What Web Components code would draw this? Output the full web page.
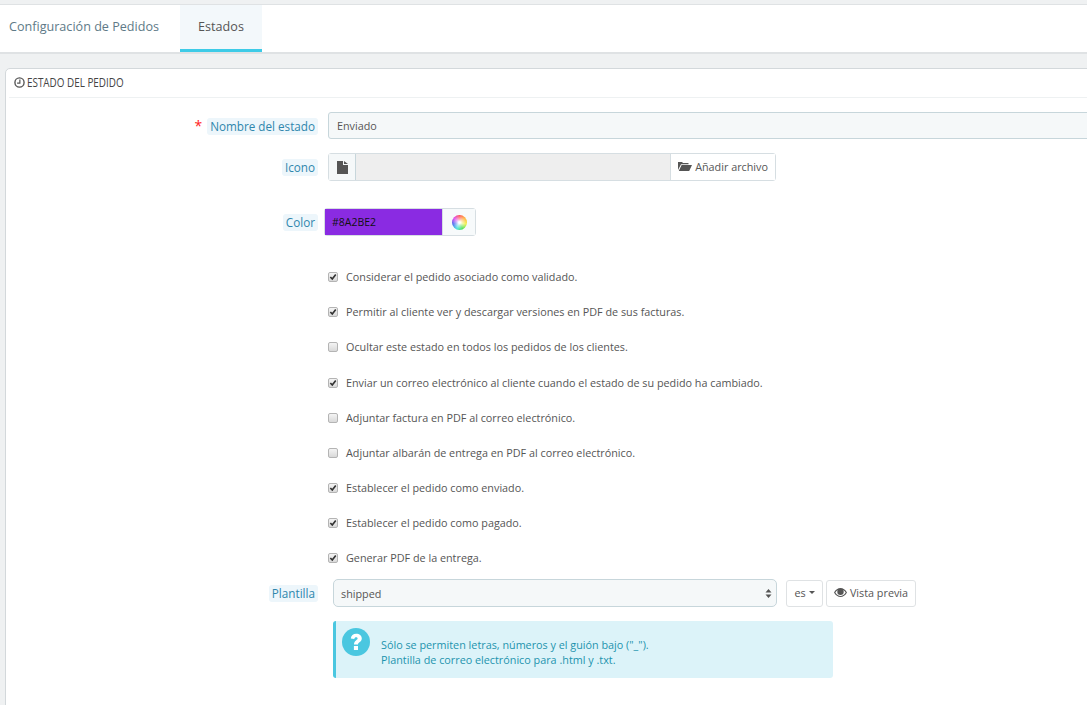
<!DOCTYPE html>
<html lang="es">
<head>
<meta charset="utf-8">
<title>Estados</title>
<style>
  html, body { margin: 0; height: 100%; overflow: hidden; background: #fff; }
  body { font-family: "Open Sans", "Liberation Sans", sans-serif; font-size: 10.8px; color: #555; }
</style>
</head>
<body>
<order-state-page></order-state-page>

<script>
const ICONS = {
  clock: '<svg width="11" height="11" viewBox="0 0 12 12"><circle cx="6" cy="6" r="5" fill="none" stroke="currentColor" stroke-width="1.5"/><path d="M6.400 2.800v3.800H3.400" fill="none" stroke="currentColor" stroke-width="1.300"/></svg>',
  file: '<svg width="11" height="13" viewBox="0 0 11 13"><path d="M0 0h6v4h5v9H0zM7 0l4 3H7z" fill="currentColor"/></svg>',
  folder: '<svg width="14" height="10" viewBox="0 0 14 10"><path d="M0 9V1h4l1 1h5.500v1.300H3L0 9zM3.600 4H14l-2.800 6H.8z" fill="currentColor"/></svg>',
  eye: '<svg width="13" height="9" viewBox="0 0 13 9"><path fill-rule="evenodd" d="M0 4.500C1.600 1.600 4 0 6.500 0S11.400 1.600 13 4.500C11.400 7.400 9 9 6.500 9S1.600 7.400 0 4.500zM1.300 4.500C2.600 6.600 4.500 8 6.500 8s3.900-1.400 5.200-3.500c-.7-1.100-1.600-2-2.600-2.600.4.500.6 1.100.6 1.800a3.200 3.200 0 1 1-6.400 0c0-.7.200-1.300.6-1.800-1 .6-1.900 1.500-2.600 2.600z" fill="currentColor"/></svg>',
  question: '<svg width="28" height="28" viewBox="0 0 28 28"><circle cx="14" cy="14" r="14" fill="#4ac7e0"/><path d="M8.800 10.500C9.100 7.300 11.200 5.700 14.200 5.700c3.200 0 5.600 1.900 5.600 4.800 0 2-1.300 3.100-2.600 4-1 .7-1.200 1.100-1.200 2.100h-4c0-2.200.6-3.200 2-4.200 1-.7 1.600-1.100 1.600-1.800 0-.8-.6-1.300-1.500-1.300-1 0-1.600.6-1.800 1.600zM11.900 18h4.100v3.900h-4.100z" fill="#fff"/></svg>'
};

const tabsTemplate = document.createElement('template');
tabsTemplate.innerHTML = `<style>
  :host { display: flex; height: 47px; margin-top: 4px; border-top: 1px solid #dfe2e4; border-bottom: 2px solid #dfe2e4; background: #fff; font-size: 12.6px; }
  a { display: flex; align-items: center; box-sizing: border-box; height: 47px; padding: 0 21px 2px 9px; border-bottom: 3px solid transparent; color: #607a87; }
  a.active { width: 82px; justify-content: center; padding: 0 0 2px; background: #f3f8fb; color: #555; border-bottom-color: #3ecbe7; }
</style>
<a>Configuración de Pedidos</a><a class="active">Estados</a>`;

class AdminTabs extends HTMLElement {
  constructor() {
    super();
    this.attachShadow({mode: 'open'}).appendChild(tabsTemplate.content.cloneNode(true));
  }
}
customElements.define('admin-tabs', AdminTabs);

const panelTemplate = document.createElement('template');
panelTemplate.innerHTML = `<style>
  :host { display: block; margin-left: 5px; margin-right: -20px; background: #fff; border: 1px solid #d3d8db; border-radius: 5px 0 0 0; padding: 0 0 30px; }
  .heading { display: flex; align-items: center; gap: 2px; height: 29px; margin: 0 0 0 3px; padding: 0 0 2px 5px; box-sizing: border-box; border-bottom: 1px solid #eef1f2; color: #555; }
  .title { font-size: 13px; font-weight: 500; color: #444; display: inline-block; transform: scaleX(.76); transform-origin: left center; white-space: nowrap; }
  svg { display: block; }
</style>
<div class="heading"><span id="icon"></span><span class="title"><slot name="title"></slot></span></div>
<slot></slot>`;

class AdminPanel extends HTMLElement {
  constructor() {
    super();
    const root = this.attachShadow({mode: 'open'});
    root.appendChild(panelTemplate.content.cloneNode(true));
    root.querySelector('#icon').innerHTML = ICONS.clock;
  }
}
customElements.define('admin-panel', AdminPanel);

const rowTemplate = document.createElement('template');
rowTemplate.innerHTML = `<style>
  :host { display: grid; grid-template-columns: 312px 1fr; align-items: center; column-gap: 10px; }
  .label { display: flex; justify-content: flex-end; align-items: center; padding-top: 1px; }
  .req { color: #f22; font-size: 14px; margin-right: 5px; line-height: 12px; position: relative; }
  .tag { background: #edf6fb; color: #2f86ad; font-size: 11.700px; line-height: 17px; height: 17px; padding: 0 3px; border-radius: 3px; white-space: nowrap; }
  .field { min-width: 0; }
</style>
<div class="label"><span class="req" hidden>*</span><span class="tag"></span></div>
<div class="field"><slot></slot></div>`;

class FormRow extends HTMLElement {
  constructor() {
    super();
    this.attachShadow({mode: 'open'}).appendChild(rowTemplate.content.cloneNode(true));
  }
  connectedCallback() {
    const root = this.shadowRoot;
    root.querySelector('.tag').textContent = this.getAttribute('label');
    if (this.hasAttribute('required')) root.querySelector('.req').hidden = false;
  }
}
customElements.define('form-row', FormRow);

const checkTemplate = document.createElement('template');
checkTemplate.innerHTML = `<style>
  :host { display: flex; align-items: center; height: 15px; margin-bottom: 20px; margin-left: 322px; color: #555; font-size: 10.800px; white-space: nowrap; }
  .box { width: 8px; height: 8px; margin-right: 8px; border: 1px solid #b4b4b4; border-radius: 2px; background: linear-gradient(#f4f4f4, #d9d9d9); position: relative; flex: none; }
  svg { position: absolute; left: 0; top: 0; display: none; }
  :host([checked]) svg { display: block; }
</style>
<span class="box"><svg width="8" height="8" viewBox="0 0 9 9"><path d="M1.500 4.500L3.700 6.800 7.600 1.800" fill="none" stroke="#333" stroke-width="1.900"/></svg></span><slot></slot>`;

class CheckRow extends HTMLElement {
  constructor() {
    super();
    this.attachShadow({mode: 'open'}).appendChild(checkTemplate.content.cloneNode(true));
  }
}
customElements.define('check-row', CheckRow);

const pageTemplate = document.createElement('template');
pageTemplate.innerHTML = `<style>
  :host { display: block; height: 705px; overflow: hidden; background: #eff1f2; }
  .content { padding-top: 14px; }
  .name-row { margin-top: 14px; }
  .input { height: 27px; box-sizing: border-box; display: flex; align-items: center; border: 1px solid #c7d6db; background: #f5f8f9; border-radius: 3px; padding: 0 8px; color: #555; }
  .icon-row { margin-top: 14px; }
  .file { display: flex; width: 448px; height: 28px; box-sizing: border-box; border: 1px solid #d6dee2; border-radius: 3px; }
  .file .addon { width: 26px; display: flex; align-items: center; justify-content: center; background: #f5f8f9; border-right: 1px solid #c7d6db; color: #555; }
  .file .mid { flex: 1; background: #eee; }
  .btn { display: flex; align-items: center; gap: 3px; box-sizing: border-box; background: #fff; color: #555; white-space: nowrap; }
  .file .btn { border-left: 1px solid #d6dee2; padding: 0 7px 2px; }
  .color-row { margin-top: 27px; }
  .color { display: flex; width: 152px; height: 28px; box-sizing: border-box; margin-left: -4px; border: 1px solid #d6dee2; border-radius: 3px; }
  .swatch { width: 117px; background: #8a2be2; color: #111; font-size: 10.500px; display: flex; align-items: center; padding-left: 7px; box-sizing: border-box; }
  .wheel { flex: 1; display: flex; align-items: center; justify-content: center; background: #f7fafb; border-left: 1px solid #d6dee2; }
  .wheel i { display: block; width: 15px; height: 15px; border-radius: 50%; background: radial-gradient(circle, #fff 0 8%, rgba(255,255,255,.6) 30%, transparent 75%), conic-gradient(#f44, #fa2, #ee3, #3d4, #3dd, #35e, #d3e, #f44); }
  .checks { margin-top: 33px; }
  .checks check-row:nth-child(3) { margin-bottom: 21px; }
  .tpl-row { margin-top: -6px; }
  .tpl { display: flex; align-items: center; margin-left: 5px; }
  .select { width: 444px; height: 28px; box-sizing: border-box; display: flex; align-items: center; justify-content: space-between; border: 1px solid #c7d6db; border-radius: 5px; background: #f5f8f9; padding: 0 3px 0 7px; color: #555; }
  .arrows { display: block; }
  .outline { height: 27px; border: 1px solid #dfe2e4; border-radius: 3px; justify-content: center; padding-bottom: 1px; }
  .lang { width: 37px; margin-left: 9px; gap: 3px; }
  .preview { width: 90px; margin-left: 3px; }
  .caret { width: 0; height: 0; border: 3.500px solid transparent; border-top-color: #555; border-bottom: 0; }
  .alert { margin: 14px 0 0 327px; width: 500px; height: 57px; box-sizing: border-box; display: flex; background: #dcf3f9; border-left: 3px solid #4ac7e0; border-radius: 3px; padding: 7px 0 0 6px; color: #1c93ae; line-height: 15px; }
  .alert svg { flex: none; display: block; }
  .alert p { margin: 9px 0 0 11px; }
</style>
<admin-tabs></admin-tabs>
<div class="content">
  <admin-panel>
    <span slot="title">ESTADO DEL PEDIDO</span>
    <form-row class="name-row" label="Nombre del estado" required><div class="input">Enviado</div></form-row>
    <form-row class="icon-row" label="Icono">
      <div class="file"><span class="addon" id="fileIcon"></span><span class="mid"></span><span class="btn"><span id="folderIcon"></span>Añadir archivo</span></div>
    </form-row>
    <form-row class="color-row" label="Color">
      <div class="color"><span class="swatch">#8A2BE2</span><span class="wheel"><i></i></span></div>
    </form-row>
    <div class="checks">
      <check-row checked>Considerar el pedido asociado como validado.</check-row>
      <check-row checked>Permitir al cliente ver y descargar versiones en PDF de sus facturas.</check-row>
      <check-row>Ocultar este estado en todos los pedidos de los clientes.</check-row>
      <check-row checked>Enviar un correo electrónico al cliente cuando el estado de su pedido ha cambiado.</check-row>
      <check-row>Adjuntar factura en PDF al correo electrónico.</check-row>
      <check-row>Adjuntar albarán de entrega en PDF al correo electrónico.</check-row>
      <check-row checked>Establecer el pedido como enviado.</check-row>
      <check-row checked>Establecer el pedido como pagado.</check-row>
      <check-row checked>Generar PDF de la entrega.</check-row>
    </div>
    <form-row class="tpl-row" label="Plantilla">
      <div class="tpl">
        <div class="select">shipped<svg class="arrows" width="9" height="11" viewBox="0 0 9 11"><path d="M4.500 1l3 3.500h-6zM4.500 10l-3-3.500h6z" fill="#555"/></svg></div>
        <span class="btn outline lang">es<span class="caret"></span></span>
        <span class="btn outline preview"><span id="eyeIcon"></span>Vista previa</span>
      </div>
    </form-row>
    <div class="alert"><span id="qIcon"></span><p>Sólo se permiten letras, números y el guión bajo ("_").<br>Plantilla de correo electrónico para .html y .txt.</p></div>
  </admin-panel>
</div>`;

class OrderStatePage extends HTMLElement {
  constructor() {
    super();
    const root = this.attachShadow({mode: 'open'});
    root.appendChild(pageTemplate.content.cloneNode(true));
    root.querySelector('#fileIcon').innerHTML = ICONS.file;
    root.querySelector('#folderIcon').innerHTML = ICONS.folder;
    root.querySelector('#eyeIcon').innerHTML = ICONS.eye;
    root.querySelector('#qIcon').innerHTML = ICONS.question;
  }
}
customElements.define('order-state-page', OrderStatePage);
</script>
</body>
</html>
